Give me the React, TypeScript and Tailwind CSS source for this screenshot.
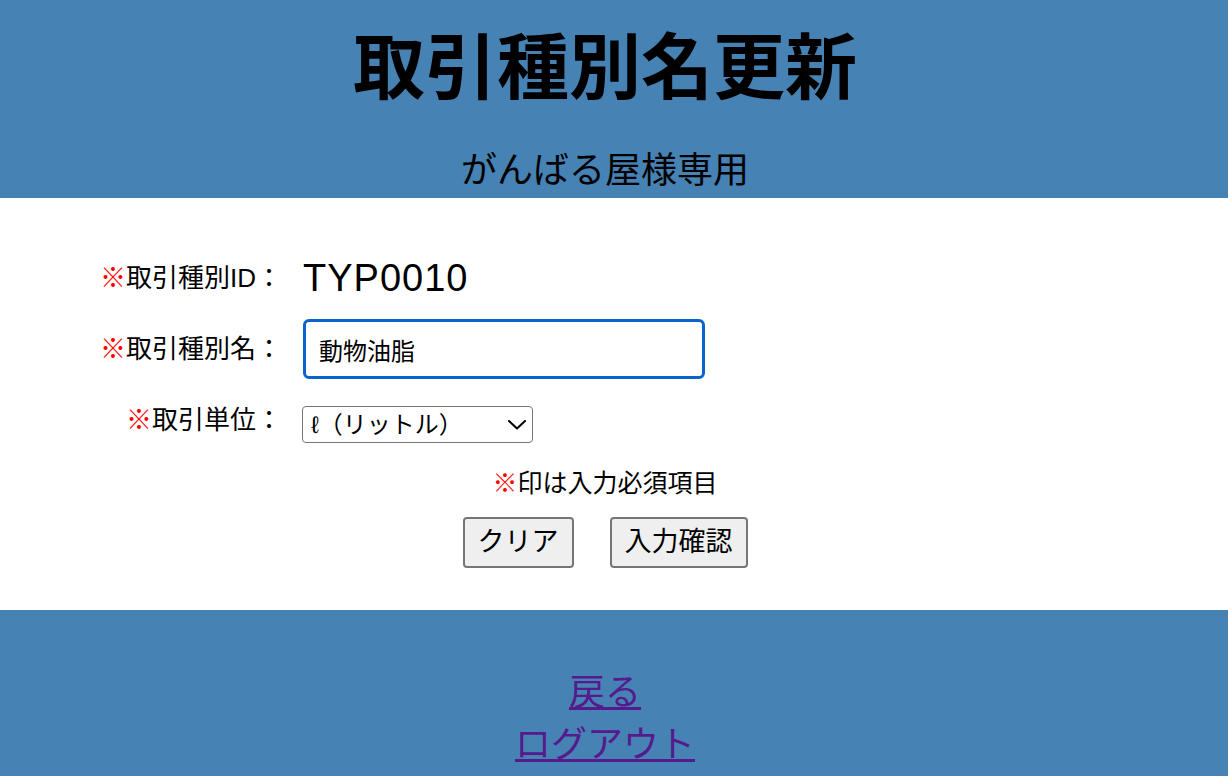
const jp = 'font-["Liberation_Sans","Noto_Sans_CJK_JP",sans-serif]';

const Mark = () => <span className="text-[#ff0000]">※</span>;

export default function App() {
  return (
    <div className={`min-h-screen w-full bg-white text-black ${jp}`}>
      <header className="flex h-[198px] flex-col items-center bg-[#4682B4] pr-[18px]">
        <h1 className="mt-[32px] text-[72px] font-bold leading-[72px]">取引種別名更新</h1>
        <p className="mt-[49px] text-[36px] leading-[36px]">がんばる屋様専用</p>
      </header>

      <main className="flex flex-col pb-[42px] pt-[58px]">
        <div className="flex h-[44px] items-center gap-[21px]">
          <span className="w-[282px] text-right text-[26px]">
            <Mark />取引種別ID：
          </span>
          <span className="text-[38px] tracking-[1px]">TYP0010</span>
        </div>

        <div className="mt-[19px] flex h-[60px] items-center gap-[21px]">
          <span className="w-[282px] text-right text-[26px]">
            <Mark />取引種別名：
          </span>
          <input
            type="text"
            defaultValue="動物油脂"
            className="h-[60px] w-[402px] rounded-[6px] border-[3px] border-[#0b63ce] bg-white px-[13px] text-[24px] outline-none"
          />
        </div>

        <div className="mt-[27px] flex h-[37px] items-center gap-[20px]">
          <span className="-mt-[8px] w-[282px] text-right text-[26px]">
            <Mark />取引単位：
          </span>
          <div className="relative">
            <select
              defaultValue="l"
              className="h-[37px] w-[231px] appearance-none rounded-[4px] border border-[#767676] bg-white pl-[8px] text-[24px] leading-[35px] outline-none"
            >
              <option value="l">ℓ（リットル）</option>
              <option value="kg">kg（キログラム）</option>
            </select>
            <svg
              viewBox="0 0 18 10"
              className="pointer-events-none absolute right-[7px] top-[14px] h-[10px] w-[18px]"
              fill="none"
              stroke="currentColor"
              strokeWidth={2}
              strokeLinecap="round"
              strokeLinejoin="round"
            >
              <polyline points="1,1 9,8.5 17,1" />
            </svg>
          </div>
        </div>

        <div className="mt-[24px] flex justify-center pr-[18px]">
          <p className="text-[25px] leading-[32px]">
            <Mark />印は入力必須項目
          </p>
        </div>

        <div className="mt-[18px] flex justify-center gap-[36px] pr-[18px]">
          <button
            type="button"
            className="h-[51px] rounded-[4px] border-2 border-[#767676] bg-[#efefef] px-[13px] text-[27px]"
          >
            クリア
          </button>
          <button
            type="button"
            className="h-[51px] rounded-[4px] border-2 border-[#767676] bg-[#efefef] px-[13px] text-[27px]"
          >
            入力確認
          </button>
        </div>
      </main>

      <footer className="flex flex-col items-center bg-[#4682B4] pb-[40px] pr-[18px] pt-[57px]">
        <a href="#" className="text-[36px] leading-[52px] text-[#551A8B] underline">
          戻る
        </a>
        <a href="#" className="text-[36px] leading-[52px] text-[#551A8B] underline">
          ログアウト
        </a>
      </footer>
    </div>
  );
}
